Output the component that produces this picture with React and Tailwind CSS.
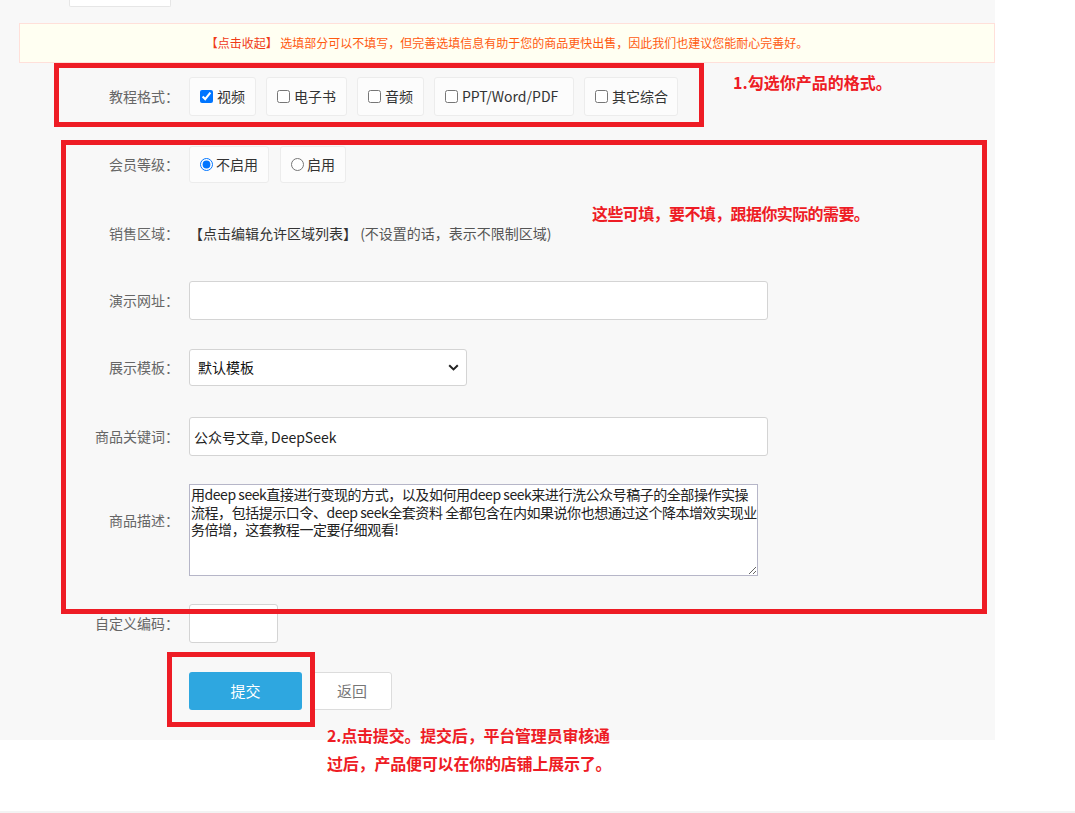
import React from "react";

const FONT = { fontFamily: '"Noto Sans CJK SC", "Noto Sans", sans-serif' };

function Label({ children, className = "" }) {
  return (
    <div className={"w-[179px] shrink-0 text-right text-[14px] text-[#666] " + className}>
      {children}
    </div>
  );
}

function CheckOpt({ w, label, checked }) {
  return (
    <label
      className={
        "flex h-[39px] items-center gap-[4px] rounded-[3px] border border-[#ececec] bg-[#fcfcfc] pl-[10px] text-[14px] text-[#333] " + w
      }
    >
      <input type="checkbox" defaultChecked={checked} className="h-[13px] w-[13px]" />
      <span>{label}</span>
    </label>
  );
}

function RadioOpt({ w, label, checked }) {
  return (
    <label
      className={
        "flex h-[37px] items-center gap-[3px] rounded-[3px] border border-[#ececec] bg-[#fcfcfc] pl-[10px] text-[14px] text-[#333] " + w
      }
    >
      <input type="radio" name="vip" defaultChecked={checked} className="h-[13px] w-[13px]" />
      <span>{label}</span>
    </label>
  );
}

const DESC =
  "用deep seek直接进行变现的方式，以及如何用deep seek来进行洗公众号稿子的全部操作实操\n流程，包括提示口令、deep seek全套资料 全都包含在内如果说你也想通过这个降本增效实现业\n务倍增，这套教程一定要仔细观看!";

export default function App() {
  return (
    <div className="relative h-[813px] w-[1075px] overflow-hidden bg-white" style={FONT}>
      <div className="flex h-[740px] w-[995px] flex-col bg-[#f8f8f8]">
        {/* top fragment */}
        <div className="ml-[69px] h-[7px] w-[102px] rounded-b-[2px] border border-t-0 border-[#e6e6e6] bg-white" />

        {/* notice */}
        <div className="ml-[19px] mt-[16px] flex h-[40px] items-center justify-center border border-[#ffe0da] bg-[#fffff2] text-[12px]">
          <span className="text-[#f03a17]">【点击收起】</span>
          <span className="text-[#ff5a10]">&nbsp;选填部分可以不填写，但完善选填信息有助于您的商品更快出售，因此我们也建议您能耐心完善好。</span>
        </div>

        {/* 教程格式 */}
        <div className="mt-[14px] flex items-center">
          <Label>教程格式：</Label>
          <div className="ml-[10px] flex gap-[10px]">
            <CheckOpt w="w-[67px]" label="视频" checked />
            <CheckOpt w="w-[81px]" label="电子书" />
            <CheckOpt w="w-[67px]" label="音频" />
            <CheckOpt w="w-[140px]" label="PPT/Word/PDF" />
            <CheckOpt w="w-[94px]" label="其它综合" />
          </div>
        </div>

        {/* 会员等级 */}
        <div className="mt-[30px] flex items-center">
          <Label>会员等级：</Label>
          <div className="ml-[10px] flex gap-[11px]">
            <RadioOpt w="w-[80px]" label="不启用" checked />
            <RadioOpt w="w-[66px]" label="启用" />
          </div>
        </div>

        {/* 销售区域 */}
        <div className="mt-[31px] flex h-[38px] items-center">
          <Label>销售区域：</Label>
          <div className="ml-[10px] text-[14px] text-[#444]">
            <span className="text-[#333]">【点击编辑允许区域列表】</span>
            <span className="text-[#555]"> (不设置的话，表示不限制区域)</span>
          </div>
        </div>

        {/* 演示网址 */}
        <div className="mt-[29px] flex items-center">
          <Label>演示网址：</Label>
          <input
            type="text"
            className="ml-[10px] h-[39px] w-[579px] rounded-[3px] border border-[#d4d4d4] bg-white px-[5px] text-[14px] text-[#333]"
          />
        </div>

        {/* 展示模板 */}
        <div className="mt-[29px] flex items-center">
          <Label>展示模板：</Label>
          <div className="relative ml-[10px] h-[37px] w-[278px]">
            <select className="h-full w-full appearance-none rounded-[3px] border border-[#d4d4d4] bg-white pl-[8px] text-[14px] text-[#111]">
              <option>默认模板</option>
            </select>
            <svg
              className="pointer-events-none absolute right-[8px] top-[15px]"
              width="11"
              height="7"
              viewBox="0 0 11 7"
            >
              <path d="M1.2 1.2 L5.5 5.4 L9.8 1.2" fill="none" stroke="#222" strokeWidth="2" />
            </svg>
          </div>
        </div>

        {/* 商品关键词 */}
        <div className="mt-[31px] flex items-center">
          <Label>商品关键词：</Label>
          <input
            type="text"
            defaultValue="公众号文章, DeepSeek"
            className="ml-[10px] h-[39px] w-[579px] rounded-[3px] border border-[#d4d4d4] bg-white px-[4px] text-[14px] text-[#222]"
          />
        </div>

        {/* 商品描述 */}
        <div className="mt-[28px] flex items-start">
          <Label className="pt-[26px]">商品描述：</Label>
          <textarea
            defaultValue={DESC}
            wrap="off"
            className="ml-[10px] h-[92px] w-[569px] resize overflow-hidden border border-[#b6b6c8] bg-white px-[1px] pt-[1px] text-[14px] leading-[17.5px] tracking-[-0.45px] text-[#222]"
          />
        </div>

        {/* 自定义编码 */}
        <div className="mt-[28px] flex items-center">
          <Label>自定义编码：</Label>
          <input
            type="text"
            className="ml-[10px] h-[39px] w-[89px] rounded-[3px] border border-[#d4d4d4] bg-white px-[5px] text-[14px]"
          />
        </div>

        {/* buttons */}
        <div className="mt-[29px] flex items-center pl-[189px]">
          <button className="h-[38px] w-[113px] rounded-[3px] bg-[#2ea7e0] text-[15px] text-white">提交</button>
          <button className="ml-[10px] h-[38px] w-[80px] rounded-[3px] border border-[#dcdcdc] bg-white text-[15px] text-[#777]">
            返回
          </button>
        </div>
      </div>

      <div className="mt-[71px] h-[2px] w-full bg-[#f3f3f3]" />

      {/* annotation boxes (overlays) */}
      <div className="pointer-events-none absolute left-[54px] top-[63px] h-[64px] w-[650px] border-[5px] border-[#ee1c25]" />
      <div className="pointer-events-none absolute left-[61px] top-[140px] h-[474px] w-[926px] border-[5px] border-[#ee1c25]" />
      <div className="pointer-events-none absolute left-[167px] top-[652px] h-[75px] w-[148px] border-[5px] border-[#ee1c25]" />

      {/* annotation texts */}
      <div className="absolute left-[733px] top-[70px] text-[16px] font-bold text-[#ee1c25]">1.勾选你产品的格式。</div>
      <div className="absolute left-[592px] top-[201px] text-[16px] font-bold tracking-[-0.6px] text-[#ee1c25]">
        这些可填，要不填，跟据你实际的需要。
      </div>
      <div className="absolute left-[327px] top-[721px] text-[16px] font-bold leading-[28px] tracking-[-0.2px] text-[#ee1c25]">
        <div>2.点击提交。提交后，平台管理员审核通</div>
        <div>过后，产品便可以在你的店铺上展示了。</div>
      </div>
    </div>
  );
}
